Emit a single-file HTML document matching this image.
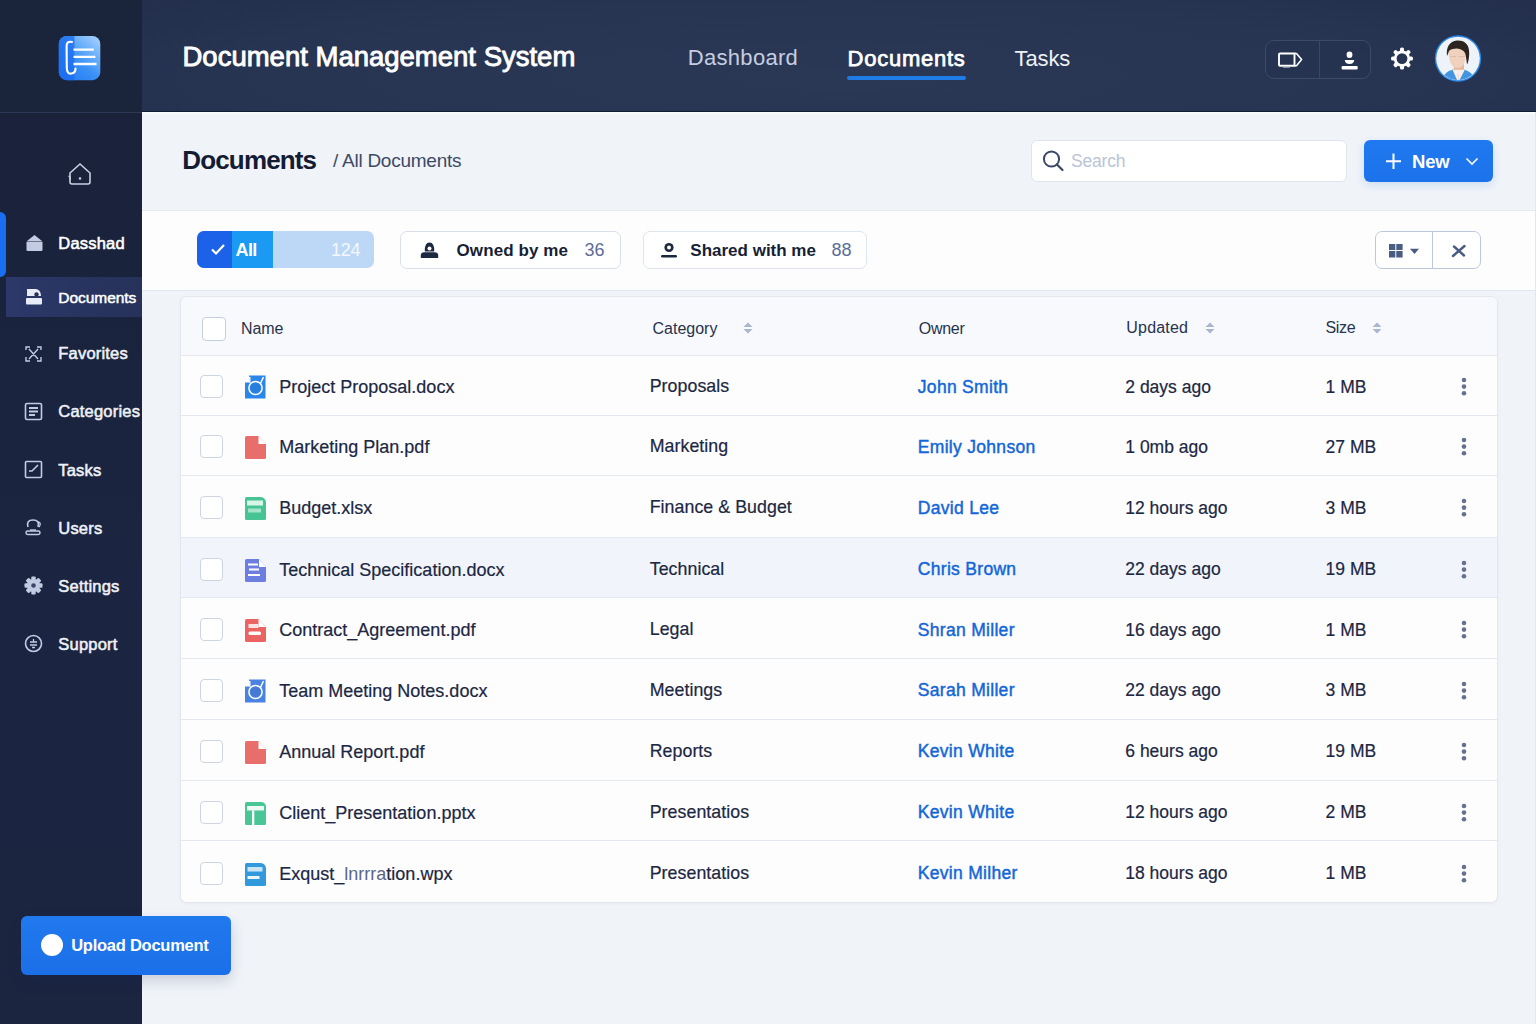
<!DOCTYPE html>
<html><head><meta charset="utf-8">
<style>
*{box-sizing:border-box;margin:0;padding:0}
html,body{width:1536px;height:1024px;overflow:hidden}
body{font-family:"Liberation Sans",sans-serif;background:#eef1f6;position:relative;color:#1c2740}
.abs{position:absolute}
.t{position:absolute;white-space:nowrap;line-height:1}
svg{overflow:visible}
</style></head>
<body>
<div class="abs" style="left:0px;top:0px;width:142px;height:1024px;background:linear-gradient(180deg,#1a2239 0%,#1a233c 25%,#1b2541 60%,#1b2540 100%)"></div>
<div class="abs" style="left:0px;top:0px;width:142px;height:112px;background:#1a243b"></div>
<div class="abs" style="left:0px;top:112px;width:142px;height:1px;background:#2c3a55"></div>
<div class="abs" style="left:142px;top:0px;width:1394px;height:112px;background:radial-gradient(ellipse 70% 120% at 50% 70%,#2a3856 0%,#273553 55%,#222e4a 100%)"></div>
<div class="abs" style="left:142px;top:111px;width:1394px;height:1px;background:#141c30"></div>
<div class="abs" style="left:142px;top:112px;width:1394px;height:912px;background:#f0f3f8"></div>
<div class="abs" style="left:142px;top:112px;width:1394px;height:2px;background:#f9fafc"></div>
<svg class="abs" style="left:58px;top:36px" width="43" height="45" viewBox="0 0 43 45">
<defs><linearGradient id="lg" x1="0" y1="1" x2="0.8" y2="0"><stop offset="0" stop-color="#1f73f2"/><stop offset="0.5" stop-color="#3a92f6"/><stop offset="1" stop-color="#9acbfc"/></linearGradient>
<clipPath id="lc"><rect x="0.8" y="0" width="41.5" height="44.2" rx="8"/></clipPath></defs>
<g clip-path="url(#lc)">
<rect x="0" y="0" width="43" height="45" fill="url(#lg)"/>
<path d="M0 0 L16.4 0 L16.4 45 L0 45 Z" fill="#1b6cf0" opacity="0.75"/>
</g>
<path d="M14 6 Q8.5 4.5 8.6 10.5 L8.8 32 Q9 38.5 13.5 37.5 Q17.5 37 17.5 32.5" stroke="#fff" stroke-width="2.1" fill="none" stroke-linecap="round"/>
<path d="M15.5 13.6 L35.8 13.6 M15.5 20.8 L37.4 20.8 M15.5 28 L38.5 28" stroke="#fff" stroke-width="2.3" fill="none"/>
</svg>
<div class="t" style="left:182.5px;top:42.9px;font-size:27.5px;font-weight:400;color:#ffffff;letter-spacing:0px;-webkit-text-stroke:0.9px #ffffff">Document Management System</div>
<div class="t" style="left:687.8px;top:47.1px;font-size:22px;font-weight:400;color:#c5cde0;letter-spacing:0.3px;">Dashboard</div>
<div class="t" style="left:847.6px;top:47.7px;font-size:22px;font-weight:400;color:#ffffff;letter-spacing:0.75px;-webkit-text-stroke:0.75px #ffffff">Documents</div>
<div class="abs" style="left:847px;top:76px;width:119px;height:4px;background:#1f7be6;border-radius:2px"></div>
<div class="t" style="left:1014.5px;top:48.0px;font-size:22px;font-weight:400;color:#eef1f6;letter-spacing:-0.1px;">Tasks</div>
<div class="abs" style="left:1265px;top:40px;width:106px;height:39px;border:1px solid #3d4a66;border-radius:9px;background:rgba(20,28,48,0.08)"></div>
<div class="abs" style="left:1319px;top:40px;width:1px;height:39px;background:#3b4864"></div>
<svg class="abs" style="left:1277px;top:50px" width="28" height="20" viewBox="0 0 28 20">
<path d="M3 3.5 L17.5 3.5 L17.5 15.8 L3 15.8 Q2 15.8 2 14.8 L2 4.5 Q2 3.5 3 3.5 Z" stroke="#ffffff" stroke-width="1.9" fill="none"/>
<path d="M17.5 3.5 L19.5 3.5 L24.6 9.6 L19.5 15.8 L17.5 15.8" stroke="#ffffff" stroke-width="1.6" fill="none" stroke-linejoin="round"/>
<path d="M6 17.3 L13 17.3" stroke="#aab2c4" stroke-width="0.9"/>
</svg>
<svg class="abs" style="left:1339px;top:49px" width="22" height="24" viewBox="0 0 22 24">
<ellipse cx="10.5" cy="5.8" rx="2.9" ry="3.2" fill="#fff"/>
<path d="M5.8 11 L15.2 11 Q15 14.9 10.5 14.9 Q6 14.9 5.8 11 Z" fill="#fff"/>
<rect x="2.6" y="16.9" width="16.1" height="3.6" rx="1" fill="#fff"/>
</svg>
<svg class="abs" style="left:1389px;top:46px" width="26" height="26" viewBox="0 0 26 26">
<g transform="translate(13,12.6)" fill="#fff">
<rect x="-2" y="-11" width="4" height="22" rx="1.6"/>
<rect x="-2" y="-11" width="4" height="22" rx="1.6" transform="rotate(45)"/>
<rect x="-2" y="-11" width="4" height="22" rx="1.6" transform="rotate(90)"/>
<rect x="-2" y="-11" width="4" height="22" rx="1.6" transform="rotate(135)"/>
<circle r="8.2"/>
</g>
<circle cx="13" cy="12.6" r="5.4" fill="#283653"/>
</svg>
<svg class="abs" style="left:1434px;top:34px" width="48" height="48" viewBox="0 0 48 48">
<defs><clipPath id="av"><circle cx="24" cy="24.5" r="21.6"/></clipPath></defs>
<circle cx="24" cy="24.5" r="23.2" fill="#2a86e6"/>
<circle cx="24" cy="24.5" r="21.8" fill="#eef3f9"/>
<g clip-path="url(#av)">
<path d="M7 50 Q8 38.5 19 35.6 L30 35.6 Q40 38 42 50 Z" fill="#4494e4"/>
<rect x="19.8" y="29" width="10.2" height="9" fill="#e6b697"/>
<path d="M18.5 35.8 L30.8 35.8 L25 47 L23.5 47 Z" fill="#f8efec"/>
<path d="M24 40 L24.6 47" stroke="#e9c9c0" stroke-width="0.6"/>
<path d="M14.5 14 Q14 33 23 34 Q31.5 34 31.5 22 Q31.5 14 23 13.5 Q15 13.5 14.5 14 Z" fill="#efd1bd"/>
<path d="M13 22 Q11.5 8 23 6.5 Q35.5 6 35.2 20 Q35 27 33 30.5 Q32 22 31 19 Q29 15 23 14.5 Q16.5 14.5 15 17 Q14 20 13 22 Z" fill="#2b2421"/>
<path d="M16.5 22.5 L22 22.5 M25 22.5 L30.5 22.5" stroke="#cfae99" stroke-width="0.8" opacity="0.8"/>
</g>
</svg>
<div class="t" style="left:182.3px;top:146.6px;font-size:26px;font-weight:700;color:#141c33;letter-spacing:-0.85px;">Documents</div>
<div class="t" style="left:333.0px;top:151.2px;font-size:19px;font-weight:400;color:#3d4a66;letter-spacing:-0.25px;">/ All Documents</div>
<div class="abs" style="left:1031px;top:140px;width:316px;height:42px;background:#fff;border:1px solid #dfe4ed;border-radius:6px"></div>
<svg class="abs" style="left:1040px;top:148px" width="26" height="26" viewBox="0 0 26 26">
<circle cx="11.5" cy="11" r="7.6" stroke="#3a4766" stroke-width="2" fill="none"/>
<path d="M17 16.5 L22.5 22" stroke="#3a4766" stroke-width="2.2" stroke-linecap="round"/>
</svg>
<div class="t" style="left:1071.0px;top:152.5px;font-size:17.5px;font-weight:400;color:#b9c4d6;letter-spacing:-0.2px;">Search</div>
<div class="abs" style="left:1364px;top:140px;width:129px;height:42px;background:linear-gradient(180deg,#2079f0,#1c72ea);border-radius:6px;box-shadow:0 3px 8px rgba(26,110,232,0.16)"></div>
<svg class="abs" style="left:1384px;top:152px" width="20" height="20" viewBox="0 0 20 20"><path d="M9.5 1.5 L9.5 17 M2 9.2 L17 9.2" stroke="#fff" stroke-width="2"/></svg>
<div class="t" style="left:1412.0px;top:152.8px;font-size:18.5px;font-weight:700;color:#ffffff;letter-spacing:-0.2px;">New</div>
<svg class="abs" style="left:1464px;top:156px" width="16" height="11" viewBox="0 0 16 11"><path d="M2.5 2.5 L8 8 L13.5 2.5" stroke="#fff" stroke-width="1.6" fill="none"/></svg>
<div class="abs" style="left:142px;top:210px;width:1394px;height:81px;background:#fdfdfe;border-top:1px solid #e6eaf1;border-bottom:1px solid #e3e8f0"></div>
<div class="abs" style="left:1535px;top:112px;width:1px;height:912px;background:#e2e6ee"></div>
<div class="abs" style="left:197px;top:231px;width:177px;height:37px;border-radius:7px;overflow:hidden;background:#bdd8f7"><div class="abs" style="left:0;top:0;width:35px;height:37px;background:#1b62e8"></div><div class="abs" style="left:35px;top:0;width:41px;height:37px;background:#1a9af2"></div></div>
<svg class="abs" style="left:209px;top:242px" width="18" height="15" viewBox="0 0 18 15"><path d="M3 7.5 L7 11.5 L15 3" stroke="#fff" stroke-width="2.2" fill="none"/></svg>
<div class="t" style="left:235.5px;top:240.8px;font-size:18px;font-weight:700;color:#ffffff;letter-spacing:-0.6px;">All</div>
<div class="t" style="left:331.0px;top:240.8px;font-size:18px;font-weight:400;color:#f4f8fe;letter-spacing:-0.3px;">124</div>
<div class="abs" style="left:400px;top:231px;width:221px;height:38px;background:#fff;border:1px solid #d9e0eb;border-radius:7px"></div>
<svg class="abs" style="left:419px;top:241px" width="21" height="19" viewBox="0 0 21 19">
<path d="M5.8 10.5 Q5.5 1.6 10.5 1.6 Q15.5 1.6 15.2 10.5 Z" fill="#1c2740"/>
<circle cx="10.5" cy="7.6" r="2" fill="#fff"/>
<path d="M1.8 17 L1.8 14.5 Q1.8 11.3 5.5 11.3 L15.5 11.3 Q19.2 11.3 19.2 14.5 L19.2 17 Z" fill="#1c2740"/>
</svg>
<div class="t" style="left:456.5px;top:241.6px;font-size:17px;font-weight:700;color:#161f36;letter-spacing:0.1px;">Owned by me</div>
<div class="t" style="left:584.5px;top:240.8px;font-size:18px;font-weight:400;color:#5c6e96;letter-spacing:0px;">36</div>
<div class="abs" style="left:643px;top:231px;width:224px;height:38px;background:#fff;border:1px solid #dfe5ee;border-radius:7px"></div>
<svg class="abs" style="left:659px;top:241px" width="20" height="19" viewBox="0 0 20 19">
<circle cx="10" cy="6.5" r="4.6" fill="#1c2740"/>
<circle cx="10" cy="6.5" r="2" fill="#fff"/>
<rect x="2" y="14" width="16" height="2.6" rx="1.3" fill="#1c2740"/>
</svg>
<div class="t" style="left:690.3px;top:241.6px;font-size:17px;font-weight:700;color:#161f36;letter-spacing:0px;">Shared with me</div>
<div class="t" style="left:831.5px;top:240.8px;font-size:18px;font-weight:400;color:#5c6e96;letter-spacing:0px;">88</div>
<div class="abs" style="left:1375px;top:231px;width:106px;height:38px;background:#fff;border:1.5px solid #bcc8dc;border-radius:7px"></div>
<div class="abs" style="left:1432px;top:231px;width:1px;height:38px;background:#bcc8dc"></div>
<svg class="abs" style="left:1388px;top:243px" width="34" height="16" viewBox="0 0 34 16">
<rect x="1" y="1" width="6.3" height="6" fill="#4a5b84"/><rect x="8.3" y="1" width="6.3" height="6" fill="#4a5b84"/>
<rect x="1" y="8" width="6.3" height="6.5" fill="#4a5b84"/><rect x="8.3" y="8" width="6.3" height="6.5" fill="#4a5b84"/>
<path d="M22 5.7 L31 5.7 L26.5 11 Z" fill="#4a5b84"/>
</svg>
<svg class="abs" style="left:1450px;top:243px" width="18" height="16" viewBox="0 0 18 16"><path d="M3 13 L14.5 3 M4 3.5 L14 12.5" stroke="#4a5b84" stroke-width="2.4" stroke-linecap="round"/></svg>
<div class="abs" style="left:180px;top:296px;width:1318px;height:607px;background:#fdfdfe;border:1px solid #e3e8f0;border-radius:7px;box-shadow:0 1px 3px rgba(30,40,70,0.04)"></div>
<div class="abs" style="left:181px;top:297px;width:1316px;height:58px;background:#f7f9fc;border-radius:6px 6px 0 0"></div>
<div class="abs" style="left:181px;top:355px;width:1316px;height:1px;background:#e3e8f1"></div>
<div class="abs" style="left:181px;top:415px;width:1316px;height:1px;background:#e3e8f1"></div>
<div class="abs" style="left:181px;top:475px;width:1316px;height:1px;background:#e3e8f1"></div>
<div class="abs" style="left:181px;top:537px;width:1316px;height:1px;background:#e3e8f1"></div>
<div class="abs" style="left:181px;top:597px;width:1316px;height:1px;background:#e3e8f1"></div>
<div class="abs" style="left:181px;top:658px;width:1316px;height:1px;background:#e3e8f1"></div>
<div class="abs" style="left:181px;top:719px;width:1316px;height:1px;background:#e3e8f1"></div>
<div class="abs" style="left:181px;top:780px;width:1316px;height:1px;background:#e3e8f1"></div>
<div class="abs" style="left:181px;top:840px;width:1316px;height:1px;background:#e3e8f1"></div>
<div class="abs" style="left:181px;top:538px;width:1316px;height:59px;background:#f1f5fb"></div>
<div class="abs" style="left:202px;top:317px;width:24px;height:24px;background:#fff;border:1.5px solid #c6cfdf;border-radius:4px"></div>
<div class="t" style="left:241.0px;top:320.7px;font-size:16px;font-weight:400;color:#27334d;letter-spacing:-0.1px;">Name</div>
<div class="t" style="left:652.5px;top:320.7px;font-size:16px;font-weight:400;color:#27334d;letter-spacing:0px;">Category</div>
<div class="t" style="left:918.8px;top:320.7px;font-size:16px;font-weight:400;color:#27334d;letter-spacing:-0.3px;">Owner</div>
<div class="t" style="left:1126.3px;top:320.3px;font-size:16px;font-weight:400;color:#27334d;letter-spacing:0.2px;">Updated</div>
<div class="t" style="left:1325.4px;top:320.2px;font-size:16px;font-weight:400;color:#27334d;letter-spacing:-0.3px;">Size</div>
<svg class="abs" style="left:742.5px;top:322px" width="10" height="12" viewBox="0 0 10 12"><path d="M5 0.5 L9.5 5 L0.5 5 Z" fill="#aab6cc"/><path d="M0.5 7 L9.5 7 L5 11.5 Z" fill="#aab6cc"/></svg>
<svg class="abs" style="left:1204.8px;top:322px" width="10" height="12" viewBox="0 0 10 12"><path d="M5 0.5 L9.5 5 L0.5 5 Z" fill="#aab6cc"/><path d="M0.5 7 L9.5 7 L5 11.5 Z" fill="#aab6cc"/></svg>
<svg class="abs" style="left:1372px;top:322px" width="10" height="12" viewBox="0 0 10 12"><path d="M5 0.5 L9.5 5 L0.5 5 Z" fill="#aab6cc"/><path d="M0.5 7 L9.5 7 L5 11.5 Z" fill="#aab6cc"/></svg>
<div class="abs" style="left:200px;top:375px;width:23px;height:23px;background:#fff;border:1.5px solid #cdd5e3;border-radius:4px"></div>
<svg class="abs" style="left:244px;top:375px" width="23" height="25" viewBox="0 0 23 25">
<path d="M5 0.5 L21.5 0.5 L21.5 23.5 L1 23.5 L1 7.5 L5 7.5 Z" fill="#2b86ea"/>
<circle cx="11.5" cy="13" r="6.6" stroke="#fff" stroke-width="1.5" fill="none"/><path d="M5.8 2.5 L5.8 7.3 M16.4 8.7 L19.2 2.6" stroke="#fff" stroke-width="1.4" fill="none" stroke-linecap="round"/>
<circle cx="11.5" cy="13" r="5" fill="#000" opacity="0.06"/></svg>
<div class="t" style="left:279.3px;top:378.2px;font-size:18px;font-weight:400;color:#1c2742;letter-spacing:0px;-webkit-text-stroke:0.2px #1c2742">Project Proposal.docx</div>
<div class="t" style="left:649.7px;top:378.4px;font-size:17.8px;font-weight:400;color:#1c2742;letter-spacing:0.05px;-webkit-text-stroke:0.2px #1c2742">Proposals</div>
<div class="t" style="left:917.8px;top:378.6px;font-size:17.5px;font-weight:400;color:#1366d8;letter-spacing:0.3px;-webkit-text-stroke:0.45px #1366d8">John Smith</div>
<div class="t" style="left:1125.3px;top:378.6px;font-size:17.5px;font-weight:400;color:#1c2742;letter-spacing:0px;-webkit-text-stroke:0.2px #1c2742">2 days ago</div>
<div class="t" style="left:1325.6px;top:378.6px;font-size:17.5px;font-weight:400;color:#1c2742;letter-spacing:0px;-webkit-text-stroke:0.2px #1c2742">1 MB</div>
<svg class="abs" style="left:1460px;top:377px" width="8" height="19" viewBox="0 0 8 19"><circle cx="4" cy="3" r="2.3" fill="#65718f"/><circle cx="4" cy="9.6" r="2.3" fill="#65718f"/><circle cx="4" cy="16.2" r="2.3" fill="#65718f"/></svg>
<div class="abs" style="left:200px;top:435px;width:23px;height:23px;background:#fff;border:1.5px solid #cdd5e3;border-radius:4px"></div>
<svg class="abs" style="left:244px;top:435px" width="23" height="25" viewBox="0 0 23 25">
<path d="M2.5 1 L14.5 1 L22 9 L22 22.5 Q22 24 20.5 24 L2.5 24 Q1 24 1 22.5 L1 2.5 Q1 1 2.5 1 Z" fill="#e86e6c"/>
<path d="M14.5 1 L22 9 L14.5 9 Z" fill="#fff"/></svg>
<div class="t" style="left:279.3px;top:438.2px;font-size:18px;font-weight:400;color:#1c2742;letter-spacing:0px;-webkit-text-stroke:0.2px #1c2742">Marketing Plan.pdf</div>
<div class="t" style="left:649.7px;top:438.3px;font-size:17.8px;font-weight:400;color:#1c2742;letter-spacing:0.05px;-webkit-text-stroke:0.2px #1c2742">Marketing</div>
<div class="t" style="left:917.8px;top:438.6px;font-size:17.5px;font-weight:400;color:#1366d8;letter-spacing:0.3px;-webkit-text-stroke:0.45px #1366d8">Emily Johnson</div>
<div class="t" style="left:1125.3px;top:438.6px;font-size:17.5px;font-weight:400;color:#1c2742;letter-spacing:0px;-webkit-text-stroke:0.2px #1c2742">1 0mb ago</div>
<div class="t" style="left:1325.6px;top:438.6px;font-size:17.5px;font-weight:400;color:#1c2742;letter-spacing:0px;-webkit-text-stroke:0.2px #1c2742">27 MB</div>
<svg class="abs" style="left:1460px;top:437px" width="8" height="19" viewBox="0 0 8 19"><circle cx="4" cy="3" r="2.3" fill="#65718f"/><circle cx="4" cy="9.6" r="2.3" fill="#65718f"/><circle cx="4" cy="16.2" r="2.3" fill="#65718f"/></svg>
<div class="abs" style="left:200px;top:496px;width:23px;height:23px;background:#fff;border:1.5px solid #cdd5e3;border-radius:4px"></div>
<svg class="abs" style="left:244px;top:496px" width="23" height="25" viewBox="0 0 23 25">
<path d="M2.5 1 L16 1 Q21 1 22 6 L22 22.5 Q22 24 20.5 24 L2.5 24 Q1 24 1 22.5 L1 2.5 Q1 1 2.5 1 Z" fill="#47c493"/>
<rect x="3" y="4.5" width="16" height="5" fill="#d8f5ea"/>
<rect x="4" y="12.5" width="13" height="4" fill="#bdebd8" opacity="0.8"/></svg>
<div class="t" style="left:279.3px;top:499.2px;font-size:18px;font-weight:400;color:#1c2742;letter-spacing:0px;-webkit-text-stroke:0.2px #1c2742">Budget.xlsx</div>
<div class="t" style="left:649.7px;top:499.4px;font-size:17.8px;font-weight:400;color:#1c2742;letter-spacing:0.05px;-webkit-text-stroke:0.2px #1c2742">Finance &amp; Budget</div>
<div class="t" style="left:917.8px;top:499.6px;font-size:17.5px;font-weight:400;color:#1366d8;letter-spacing:0.3px;-webkit-text-stroke:0.45px #1366d8">David Lee</div>
<div class="t" style="left:1125.3px;top:499.6px;font-size:17.5px;font-weight:400;color:#1c2742;letter-spacing:0px;-webkit-text-stroke:0.2px #1c2742">12 hours ago</div>
<div class="t" style="left:1325.6px;top:499.6px;font-size:17.5px;font-weight:400;color:#1c2742;letter-spacing:0px;-webkit-text-stroke:0.2px #1c2742">3 MB</div>
<svg class="abs" style="left:1460px;top:498px" width="8" height="19" viewBox="0 0 8 19"><circle cx="4" cy="3" r="2.3" fill="#65718f"/><circle cx="4" cy="9.6" r="2.3" fill="#65718f"/><circle cx="4" cy="16.2" r="2.3" fill="#65718f"/></svg>
<div class="abs" style="left:200px;top:558px;width:23px;height:23px;background:#fff;border:1.5px solid #cdd5e3;border-radius:4px"></div>
<svg class="abs" style="left:244px;top:558px" width="23" height="25" viewBox="0 0 23 25">
<path d="M2.5 1 L15 1 L22 9 L22 22.5 Q22 24 20.5 24 L2.5 24 Q1 24 1 22.5 L1 2.5 Q1 1 2.5 1 Z" fill="#6c7ee0"/>
<path d="M15 1 L22 9 L15 9 Z" fill="#fff"/>
<path d="M4 6.5 L14 6.5 M5 11.5 L15 11.5 M4 17 L16 17" stroke="#fff" stroke-width="2.2"/></svg>
<div class="t" style="left:279.3px;top:560.5px;font-size:18px;font-weight:400;color:#1c2742;letter-spacing:0px;-webkit-text-stroke:0.2px #1c2742">Technical Specification.docx</div>
<div class="t" style="left:649.7px;top:560.6px;font-size:17.8px;font-weight:400;color:#1c2742;letter-spacing:0.05px;-webkit-text-stroke:0.2px #1c2742">Technical</div>
<div class="t" style="left:917.8px;top:560.9px;font-size:17.5px;font-weight:400;color:#1366d8;letter-spacing:0.3px;-webkit-text-stroke:0.45px #1366d8">Chris Brown</div>
<div class="t" style="left:1125.3px;top:560.9px;font-size:17.5px;font-weight:400;color:#1c2742;letter-spacing:0px;-webkit-text-stroke:0.2px #1c2742">22 days ago</div>
<div class="t" style="left:1325.6px;top:560.9px;font-size:17.5px;font-weight:400;color:#1c2742;letter-spacing:0px;-webkit-text-stroke:0.2px #1c2742">19 MB</div>
<svg class="abs" style="left:1460px;top:560px" width="8" height="19" viewBox="0 0 8 19"><circle cx="4" cy="3" r="2.3" fill="#65718f"/><circle cx="4" cy="9.6" r="2.3" fill="#65718f"/><circle cx="4" cy="16.2" r="2.3" fill="#65718f"/></svg>
<div class="abs" style="left:200px;top:618px;width:23px;height:23px;background:#fff;border:1.5px solid #cdd5e3;border-radius:4px"></div>
<svg class="abs" style="left:244px;top:618px" width="23" height="25" viewBox="0 0 23 25">
<path d="M2.5 1 L14.5 1 L22 9 L22 22.5 Q22 24 20.5 24 L2.5 24 Q1 24 1 22.5 L1 2.5 Q1 1 2.5 1 Z" fill="#ea6463"/>
<path d="M14.5 1 L22 9 L14.5 9 Z" fill="#fff"/>
<rect x="4.5" y="6" width="10" height="4" fill="#fbe3e3"/>
<rect x="4.5" y="13.5" width="12.5" height="3.5" rx="1.5" fill="#fff"/></svg>
<div class="t" style="left:279.3px;top:621.1px;font-size:18px;font-weight:400;color:#1c2742;letter-spacing:0px;-webkit-text-stroke:0.2px #1c2742">Contract_Agreement.pdf</div>
<div class="t" style="left:649.7px;top:621.2px;font-size:17.8px;font-weight:400;color:#1c2742;letter-spacing:0.05px;-webkit-text-stroke:0.2px #1c2742">Legal</div>
<div class="t" style="left:917.8px;top:621.5px;font-size:17.5px;font-weight:400;color:#1366d8;letter-spacing:0.3px;-webkit-text-stroke:0.45px #1366d8">Shran Miller</div>
<div class="t" style="left:1125.3px;top:621.5px;font-size:17.5px;font-weight:400;color:#1c2742;letter-spacing:0px;-webkit-text-stroke:0.2px #1c2742">16 days ago</div>
<div class="t" style="left:1325.6px;top:621.5px;font-size:17.5px;font-weight:400;color:#1c2742;letter-spacing:0px;-webkit-text-stroke:0.2px #1c2742">1 MB</div>
<svg class="abs" style="left:1460px;top:620px" width="8" height="19" viewBox="0 0 8 19"><circle cx="4" cy="3" r="2.3" fill="#65718f"/><circle cx="4" cy="9.6" r="2.3" fill="#65718f"/><circle cx="4" cy="16.2" r="2.3" fill="#65718f"/></svg>
<div class="abs" style="left:200px;top:679px;width:23px;height:23px;background:#fff;border:1.5px solid #cdd5e3;border-radius:4px"></div>
<svg class="abs" style="left:244px;top:679px" width="23" height="25" viewBox="0 0 23 25">
<path d="M5 0.5 L21.5 0.5 L21.5 23.5 L1 23.5 L1 7.5 L5 7.5 Z" fill="#4a82e2"/>
<circle cx="11.5" cy="13" r="6.6" stroke="#fff" stroke-width="1.5" fill="none"/><path d="M5.8 2.5 L5.8 7.3 M16.4 8.7 L19.2 2.6" stroke="#fff" stroke-width="1.4" fill="none" stroke-linecap="round"/>
<circle cx="11.5" cy="13" r="5" fill="#000" opacity="0.06"/></svg>
<div class="t" style="left:279.3px;top:681.8px;font-size:18px;font-weight:400;color:#1c2742;letter-spacing:0px;-webkit-text-stroke:0.2px #1c2742">Team Meeting Notes.docx</div>
<div class="t" style="left:649.7px;top:682.0px;font-size:17.8px;font-weight:400;color:#1c2742;letter-spacing:0.05px;-webkit-text-stroke:0.2px #1c2742">Meetings</div>
<div class="t" style="left:917.8px;top:682.2px;font-size:17.5px;font-weight:400;color:#1366d8;letter-spacing:0.3px;-webkit-text-stroke:0.45px #1366d8">Sarah Miller</div>
<div class="t" style="left:1125.3px;top:682.2px;font-size:17.5px;font-weight:400;color:#1c2742;letter-spacing:0px;-webkit-text-stroke:0.2px #1c2742">22 days ago</div>
<div class="t" style="left:1325.6px;top:682.2px;font-size:17.5px;font-weight:400;color:#1c2742;letter-spacing:0px;-webkit-text-stroke:0.2px #1c2742">3 MB</div>
<svg class="abs" style="left:1460px;top:681px" width="8" height="19" viewBox="0 0 8 19"><circle cx="4" cy="3" r="2.3" fill="#65718f"/><circle cx="4" cy="9.6" r="2.3" fill="#65718f"/><circle cx="4" cy="16.2" r="2.3" fill="#65718f"/></svg>
<div class="abs" style="left:200px;top:740px;width:23px;height:23px;background:#fff;border:1.5px solid #cdd5e3;border-radius:4px"></div>
<svg class="abs" style="left:244px;top:740px" width="23" height="25" viewBox="0 0 23 25">
<path d="M2.5 1 L14.5 1 L22 9 L22 22.5 Q22 24 20.5 24 L2.5 24 Q1 24 1 22.5 L1 2.5 Q1 1 2.5 1 Z" fill="#e86e6c"/>
<path d="M14.5 1 L22 9 L14.5 9 Z" fill="#fff"/></svg>
<div class="t" style="left:279.3px;top:742.6px;font-size:18px;font-weight:400;color:#1c2742;letter-spacing:0px;-webkit-text-stroke:0.2px #1c2742">Annual Report.pdf</div>
<div class="t" style="left:649.7px;top:742.8px;font-size:17.8px;font-weight:400;color:#1c2742;letter-spacing:0.05px;-webkit-text-stroke:0.2px #1c2742">Reports</div>
<div class="t" style="left:917.8px;top:743.0px;font-size:17.5px;font-weight:400;color:#1366d8;letter-spacing:0.3px;-webkit-text-stroke:0.45px #1366d8">Kevin White</div>
<div class="t" style="left:1125.3px;top:743.0px;font-size:17.5px;font-weight:400;color:#1c2742;letter-spacing:0px;-webkit-text-stroke:0.2px #1c2742">6 heurs ago</div>
<div class="t" style="left:1325.6px;top:743.0px;font-size:17.5px;font-weight:400;color:#1c2742;letter-spacing:0px;-webkit-text-stroke:0.2px #1c2742">19 MB</div>
<svg class="abs" style="left:1460px;top:742px" width="8" height="19" viewBox="0 0 8 19"><circle cx="4" cy="3" r="2.3" fill="#65718f"/><circle cx="4" cy="9.6" r="2.3" fill="#65718f"/><circle cx="4" cy="16.2" r="2.3" fill="#65718f"/></svg>
<div class="abs" style="left:200px;top:801px;width:23px;height:23px;background:#fff;border:1.5px solid #cdd5e3;border-radius:4px"></div>
<svg class="abs" style="left:244px;top:801px" width="23" height="25" viewBox="0 0 23 25">
<path d="M2.5 1 L17 1 Q21 1 22 5 L22 22.5 Q22 24 20.5 24 L2.5 24 Q1 24 1 22.5 L1 2.5 Q1 1 2.5 1 Z" fill="#4ac596"/>
<rect x="3" y="5" width="17" height="4.5" fill="#fff" opacity="0.9"/>
<rect x="8" y="9.5" width="2.3" height="14.5" fill="#fff"/></svg>
<div class="t" style="left:279.3px;top:803.5px;font-size:18px;font-weight:400;color:#1c2742;letter-spacing:0px;-webkit-text-stroke:0.2px #1c2742">Client_Presentation.pptx</div>
<div class="t" style="left:649.7px;top:803.7px;font-size:17.8px;font-weight:400;color:#1c2742;letter-spacing:0.05px;-webkit-text-stroke:0.2px #1c2742">Presentatios</div>
<div class="t" style="left:917.8px;top:803.9px;font-size:17.5px;font-weight:400;color:#1366d8;letter-spacing:0.3px;-webkit-text-stroke:0.45px #1366d8">Kevin White</div>
<div class="t" style="left:1125.3px;top:803.9px;font-size:17.5px;font-weight:400;color:#1c2742;letter-spacing:0px;-webkit-text-stroke:0.2px #1c2742">12 hours ago</div>
<div class="t" style="left:1325.6px;top:803.9px;font-size:17.5px;font-weight:400;color:#1c2742;letter-spacing:0px;-webkit-text-stroke:0.2px #1c2742">2 MB</div>
<svg class="abs" style="left:1460px;top:803px" width="8" height="19" viewBox="0 0 8 19"><circle cx="4" cy="3" r="2.3" fill="#65718f"/><circle cx="4" cy="9.6" r="2.3" fill="#65718f"/><circle cx="4" cy="16.2" r="2.3" fill="#65718f"/></svg>
<div class="abs" style="left:200px;top:862px;width:23px;height:23px;background:#fff;border:1.5px solid #cdd5e3;border-radius:4px"></div>
<svg class="abs" style="left:244px;top:862px" width="23" height="25" viewBox="0 0 23 25">
<path d="M2.5 1 L16 1 Q21 1 22 6 L22 22.5 Q22 24 20.5 24 L2.5 24 Q1 24 1 22.5 L1 2.5 Q1 1 2.5 1 Z" fill="#3399dd"/>
<rect x="3.5" y="5" width="15" height="4.5" fill="#d9ecf9" opacity="0.9"/>
<rect x="3.5" y="14" width="12" height="3" fill="#e9f4fb"/></svg>
<div class="t" style="left:279.3px;top:864.9px;font-size:18px;font-weight:400;color:#1c2742;letter-spacing:0px;-webkit-text-stroke:0.2px #1c2742">Exqust_<span style="color:#5d6784;-webkit-text-stroke:0 #000">lnrrra</span>tion.wpx</div>
<div class="t" style="left:649.7px;top:865.0px;font-size:17.8px;font-weight:400;color:#1c2742;letter-spacing:0.05px;-webkit-text-stroke:0.2px #1c2742">Presentatios</div>
<div class="t" style="left:917.8px;top:865.3px;font-size:17.5px;font-weight:400;color:#1366d8;letter-spacing:0.3px;-webkit-text-stroke:0.45px #1366d8">Kevin Milher</div>
<div class="t" style="left:1125.3px;top:865.3px;font-size:17.5px;font-weight:400;color:#1c2742;letter-spacing:0px;-webkit-text-stroke:0.2px #1c2742">18 hours ago</div>
<div class="t" style="left:1325.6px;top:865.3px;font-size:17.5px;font-weight:400;color:#1c2742;letter-spacing:0px;-webkit-text-stroke:0.2px #1c2742">1 MB</div>
<svg class="abs" style="left:1460px;top:864px" width="8" height="19" viewBox="0 0 8 19"><circle cx="4" cy="3" r="2.3" fill="#65718f"/><circle cx="4" cy="9.6" r="2.3" fill="#65718f"/><circle cx="4" cy="16.2" r="2.3" fill="#65718f"/></svg>
<svg class="abs" style="left:66px;top:161px" width="28" height="26" viewBox="0 0 28 26">
<path d="M4 12 L14 3 L24 12 L24 21 Q24 23 22 23 L6 23 Q4 23 4 21 Z" stroke="#c9d0e2" stroke-width="1.6" fill="none"/>
<path d="M2.5 15 Q5 16 4 19" stroke="#c9d0e2" stroke-width="1.3" fill="none"/>
<circle cx="14" cy="17.5" r="1.3" fill="#c9d0e2"/>
</svg>
<div class="abs" style="left:0px;top:212px;width:6px;height:65px;background:#1a6ff0;border-radius:0 6px 6px 0"></div>
<div class="abs" style="left:6px;top:277px;width:136px;height:40px;background:linear-gradient(90deg,#2b3869 0%,#28345f 60%,#26325a 100%)"></div>
<div class="t" style="left:58.3px;top:234.9px;font-size:16.5px;font-weight:400;color:#ffffff;letter-spacing:0.2px;-webkit-text-stroke:0.55px #ffffff">Dasshad</div>
<div class="t" style="left:58.3px;top:289.5px;font-size:15.5px;font-weight:400;color:#ffffff;letter-spacing:-0.05px;-webkit-text-stroke:0.5px #ffffff">Documents</div>
<div class="t" style="left:58.3px;top:345.4px;font-size:16.5px;font-weight:400;color:#eef1f7;letter-spacing:0.2px;-webkit-text-stroke:0.55px #eef1f7">Favorites</div>
<div class="t" style="left:58.3px;top:403.2px;font-size:16.5px;font-weight:400;color:#eef1f7;letter-spacing:0.2px;-webkit-text-stroke:0.55px #eef1f7">Categories</div>
<div class="t" style="left:58.3px;top:461.5px;font-size:16.5px;font-weight:400;color:#eef1f7;letter-spacing:0.2px;-webkit-text-stroke:0.55px #eef1f7">Tasks</div>
<div class="t" style="left:58.3px;top:520.2px;font-size:16.5px;font-weight:400;color:#eef1f7;letter-spacing:0.2px;-webkit-text-stroke:0.55px #eef1f7">Users</div>
<div class="t" style="left:58.3px;top:577.6px;font-size:16.5px;font-weight:400;color:#eef1f7;letter-spacing:0.2px;-webkit-text-stroke:0.55px #eef1f7">Settings</div>
<div class="t" style="left:58.3px;top:635.7px;font-size:16.5px;font-weight:400;color:#eef1f7;letter-spacing:0.2px;-webkit-text-stroke:0.55px #eef1f7">Support</div>
<svg class="abs" style="left:25px;top:234px" width="19" height="18" viewBox="0 0 19 18"><path d="M9.5 1 L17 7 L2 7 Z" fill="#c3cbe3"/><rect x="1.5" y="7.5" width="16" height="9.5" rx="1" fill="#c3cbe3"/></svg>
<svg class="abs" style="left:25px;top:287px" width="18" height="19" viewBox="0 0 18 19"><path d="M2 2 L11 2 Q16 3 16 9 L2 9 Z" fill="#e8ecf6"/><circle cx="11.5" cy="7.5" r="2.2" fill="#26325a"/><rect x="1" y="11" width="16" height="6.5" rx="1" fill="#e8ecf6"/></svg>
<svg class="abs" style="left:24px;top:345px" width="19" height="18" viewBox="0 0 19 18"><path d="M2 5 L2 2 L6 2 M13 2 L17 2 L17 5 M17 12 L17 16 L13 16 M6 16 L2 16 L2 12 M5 4 L14 14 M14 4 L5 14" stroke="#c3cbe3" stroke-width="1.4" fill="none"/></svg>
<svg class="abs" style="left:24px;top:402px" width="19" height="19" viewBox="0 0 19 19"><rect x="1.5" y="1.5" width="16" height="16" rx="1.5" stroke="#c3cbe3" stroke-width="1.6" fill="none"/><path d="M5 6 L14 6 M5 9.5 L14 9.5 M5 13 L11 13" stroke="#c3cbe3" stroke-width="1.8"/></svg>
<svg class="abs" style="left:24px;top:460px" width="19" height="19" viewBox="0 0 19 19"><rect x="1.5" y="1.5" width="16" height="16" rx="1" stroke="#c3cbe3" stroke-width="1.6" fill="none"/><path d="M5 11 L8 11 L14 5" stroke="#c3cbe3" stroke-width="1.6" fill="none"/></svg>
<svg class="abs" style="left:24px;top:518px" width="19" height="18" viewBox="0 0 19 18"><path d="M4 9 Q2 2 9 2 Q16 2 14 9" stroke="#c3cbe3" stroke-width="1.6" fill="none"/><path d="M14 4 Q18 5 15 9" stroke="#c3cbe3" stroke-width="1.3" fill="none"/><rect x="2" y="13" width="14" height="3.5" rx="1.7" stroke="#c3cbe3" stroke-width="1.5" fill="none"/><path d="M6 12 L12 12" stroke="#c3cbe3" stroke-width="1.4"/></svg>
<svg class="abs" style="left:24px;top:576px" width="19" height="19" viewBox="0 0 19 19"><g transform="translate(9.5,9.5)" fill="#c3cbe3"><rect x="-2.2" y="-9" width="4.4" height="18" rx="1"/><rect x="-2.2" y="-9" width="4.4" height="18" rx="1" transform="rotate(45)"/><rect x="-2.2" y="-9" width="4.4" height="18" rx="1" transform="rotate(90)"/><rect x="-2.2" y="-9" width="4.4" height="18" rx="1" transform="rotate(135)"/><circle r="6.5"/></g><circle cx="9.5" cy="9.5" r="2.3" fill="#3b4866"/></svg>
<svg class="abs" style="left:24px;top:634px" width="19" height="19" viewBox="0 0 19 19"><circle cx="9.5" cy="9.5" r="8" stroke="#c3cbe3" stroke-width="1.6" fill="none"/><path d="M6 8 L13 8 M6 11 L13 11 M8 13.5 L11 13.5 M9.5 5 L9.5 8" stroke="#c3cbe3" stroke-width="1.3"/></svg>
<div class="abs" style="left:21px;top:916px;width:210px;height:59px;background:linear-gradient(180deg,#2179ee 0%,#1b6fe8 100%);border-radius:6px;box-shadow:0 6px 14px rgba(20,40,90,0.18)"></div>
<div class="abs" style="left:41px;top:934px;width:22px;height:22px;border-radius:50%;background:#fff"></div>
<div class="t" style="left:71.2px;top:937.3px;font-size:16.5px;font-weight:700;color:#ffffff;letter-spacing:-0.25px;">Upload Document</div>
</body></html>
